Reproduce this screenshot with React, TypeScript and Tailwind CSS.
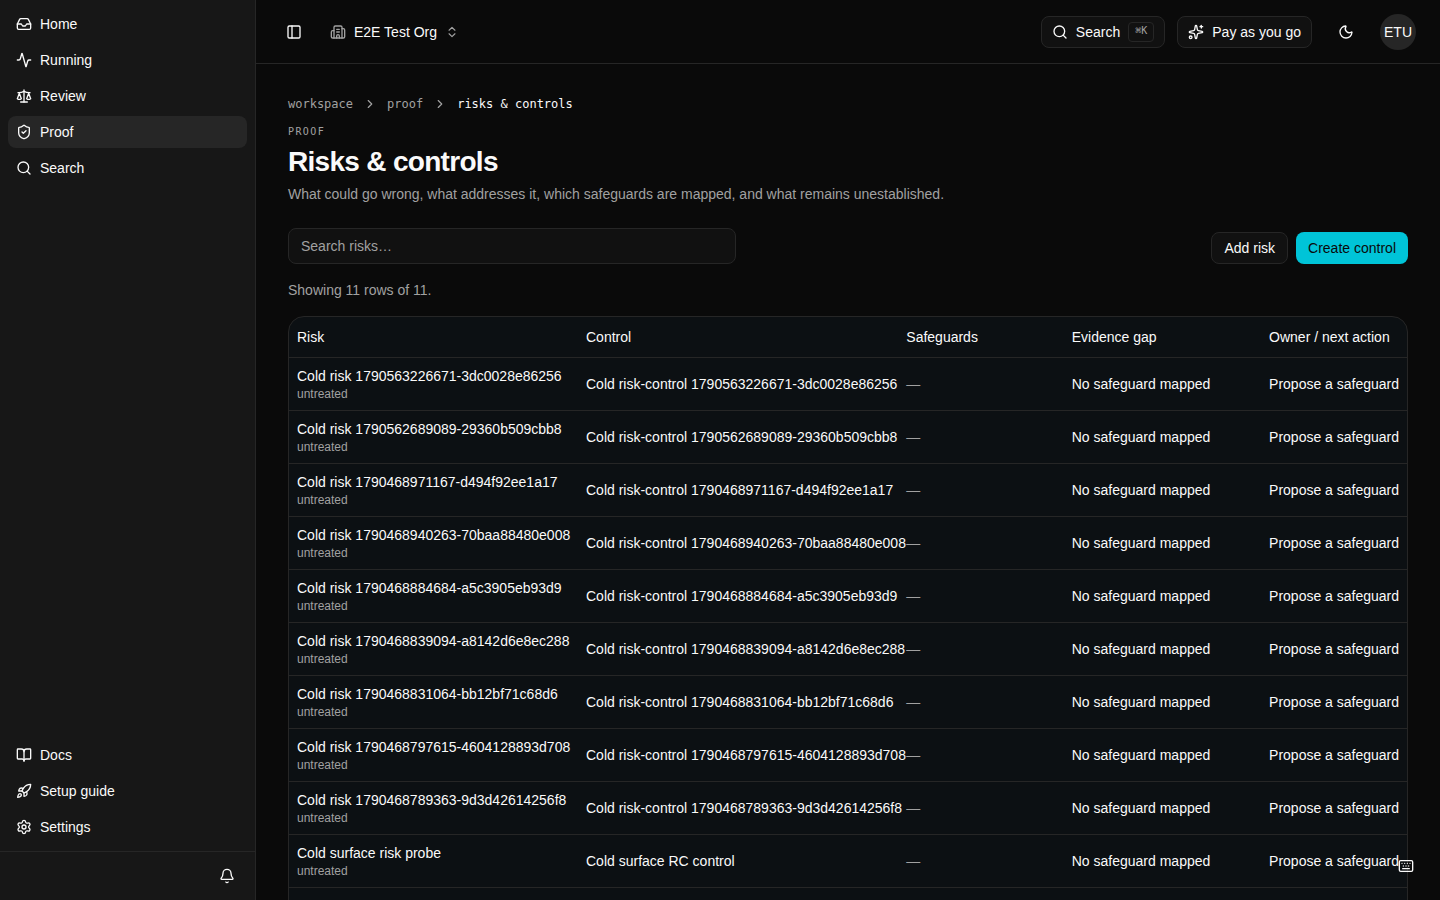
import React, { useState } from "react";
import {
    Activity,
    Bell,
    BookOpen,
    Building2,
    ChevronRight,
    ChevronsUpDown,
    Inbox,
    Keyboard,
    Moon,
    PanelLeft,
    Rocket,
    Scale,
    Search,
    Settings,
    ShieldCheck,
    Sparkles,
} from "lucide-react";
import type { LucideIcon } from "lucide-react";

type NavEntry = { label: string; icon: LucideIcon; active?: boolean };

const mainNav: NavEntry[] = [
    { label: "Home", icon: Inbox },
    { label: "Running", icon: Activity },
    { label: "Review", icon: Scale },
    { label: "Proof", icon: ShieldCheck, active: true },
    { label: "Search", icon: Search },
];

const footerNav: NavEntry[] = [
    { label: "Docs", icon: BookOpen },
    { label: "Setup guide", icon: Rocket },
    { label: "Settings", icon: Settings },
];

const coldIds = [
    "1790563226671-3dc0028e86256",
    "1790562689089-29360b509cbb8",
    "1790468971167-d494f92ee1a17",
    "1790468940263-70baa88480e008",
    "1790468884684-a5c3905eb93d9",
    "1790468839094-a8142d6e8ec288",
    "1790468831064-bb12bf71c68d6",
    "1790468797615-4604128893d708",
    "1790468789363-9d3d42614256f8",
];

const rows = [
    ...coldIds.map((id) => ({ risk: `Cold risk ${id}`, control: `Cold risk-control ${id}` })),
    { risk: "Cold surface risk probe", control: "Cold surface RC control" },
    { risk: "Cold surface risk", control: "Cold surface control" },
];

function NavList({ items }: { items: NavEntry[] }) {
    return (
        <ul className="flex flex-col gap-1 p-2">
            {items.map(({ label, icon: Icon, active }) => (
                <li key={label}>
                    <a
                        href="#"
                        aria-current={active ? "page" : undefined}
                        className={`flex h-8 items-center gap-2 rounded-lg px-2 hover:bg-[#262626] ${active ? "bg-[#262626]" : ""}`}
                    >
                        <Icon className="size-4" />
                        {label}
                    </a>
                </li>
            ))}
        </ul>
    );
}

function Sidebar() {
    return (
        <aside className="sticky top-0 flex h-screen w-64 shrink-0 flex-col border-r border-[#262626] bg-[#171717]">
            <nav aria-label="Main" className="flex flex-1 flex-col justify-between">
                <NavList items={mainNav} />
                <NavList items={footerNav} />
            </nav>
            <div className="flex justify-end border-t border-[#262626] px-3 py-2">
                <button aria-label="Notifications" className="flex size-8 items-center justify-center rounded-lg">
                    <Bell className="size-4" />
                </button>
            </div>
        </aside>
    );
}

function TopBar() {
    return (
        <header className="flex h-16 items-center justify-between border-b border-[#262626] px-6">
            <div className="flex items-center gap-4">
                <button aria-label="Toggle sidebar" className="flex size-7 items-center justify-center">
                    <PanelLeft className="size-4" />
                </button>
                <button className="flex h-8 items-center gap-2 px-1.5">
                    <Building2 className="size-4 text-[#a1a1a1]" />
                    E2E Test Org
                    <ChevronsUpDown className="size-3.5 text-[#a1a1a1]" />
                </button>
            </div>
            <div className="flex items-center gap-3">
                <button className="flex h-8 items-center gap-2 rounded-lg border border-[#262626] bg-[#111111] px-2.5">
                    <Search className="size-4" />
                    Search
                    <kbd className="rounded border border-[#262626] px-1.5 pb-0.5 font-['DejaVu_Sans_Mono',monospace] text-[10px] leading-4 text-[#a1a1a1]">
                        ⌘K
                    </kbd>
                </button>
                <button className="flex h-8 items-center gap-2 rounded-lg border border-[#262626] bg-[#111111] px-2.5">
                    <Sparkles className="size-4" />
                    Pay as you go
                </button>
                <button aria-label="Toggle theme" className="mx-1 flex size-9 items-center justify-center">
                    <Moon className="size-4" />
                </button>
                <button className="flex size-9 items-center justify-center rounded-full bg-[#262626]">ETU</button>
            </div>
        </header>
    );
}

export default function App() {
    const [query, setQuery] = useState("");
    const visible = rows.filter((r) => r.risk.toLowerCase().includes(query.toLowerCase()));

    return (
        <div className="flex min-h-screen bg-[#0a0a0a] font-['Liberation_Sans',Arial,sans-serif] text-sm text-[#fafafa]">
            <Sidebar />
            <div className="min-w-0 flex-1">
                <TopBar />
                <main className="p-8">
                    <nav
                        aria-label="Breadcrumb"
                        className="flex items-center gap-2.5 font-['DejaVu_Sans_Mono',monospace] text-xs text-[#a1a1a1]"
                    >
                        <a href="#">workspace</a>
                        <ChevronRight className="size-3.5" />
                        <a href="#">proof</a>
                        <ChevronRight className="size-3.5" />
                        <span className="text-[#fafafa]">risks &amp; controls</span>
                    </nav>

                    <p className="mt-3 font-['DejaVu_Sans_Mono',monospace] text-[10px] leading-4 tracking-[0.14em] text-[#a1a1a1] uppercase">
                        Proof
                    </p>
                    <h1 className="mt-1 text-[28px] leading-9 font-bold tracking-tight">Risks &amp; controls</h1>
                    <p className="mt-1 text-[#a1a1a1]">
                        What could go wrong, what addresses it, which safeguards are mapped, and what remains
                        unestablished.
                    </p>

                    <div className="mt-6 flex items-end justify-between gap-4">
                        <input
                            type="search"
                            aria-label="Search risks"
                            placeholder="Search risks…"
                            value={query}
                            onChange={(e) => setQuery(e.target.value)}
                            className="h-9 w-full max-w-md rounded-lg border border-[#262626] bg-[#111111] px-3 placeholder:text-[#a1a1a1]"
                        />
                        <div className="flex gap-2">
                            <button className="h-8 rounded-lg border border-[#262626] bg-[#111111] px-3">Add risk</button>
                            <button className="h-8 rounded-lg bg-[#00c4d8] px-3 text-[#0a0a0a]">Create control</button>
                        </div>
                    </div>

                    <p className="mt-4 text-[#a1a1a1]">
                        Showing {visible.length} rows of {rows.length}.
                    </p>

                    <div className="mt-4 overflow-hidden rounded-2xl border border-[#262626] bg-[#0c1013]">
                        <table className="w-full table-fixed text-left whitespace-nowrap">
                            <thead>
                                <tr className="h-10 border-b border-[#262626] *:px-2 *:font-normal">
                                    <th className="w-[25.85%]">Risk</th>
                                    <th className="w-[28.65%]">Control</th>
                                    <th className="w-[14.8%]">Safeguards</th>
                                    <th className="w-[17.65%]">Evidence gap</th>
                                    <th>Owner / next action</th>
                                </tr>
                            </thead>
                            <tbody>
                                {visible.map((r) => (
                                    <tr key={r.risk} className="border-b border-[#262626] last:border-b-0 *:p-2">
                                        <td>
                                            <div>{r.risk}</div>
                                            <div className="text-xs text-[#a1a1a1]">untreated</div>
                                        </td>
                                        <td>{r.control}</td>
                                        <td className="text-[#a1a1a1]">—</td>
                                        <td>No safeguard mapped</td>
                                        <td>Propose a safeguard</td>
                                    </tr>
                                ))}
                            </tbody>
                        </table>
                    </div>
                </main>
            </div>

            <button
                aria-label="Keyboard shortcuts"
                className="fixed right-4 bottom-4 flex size-9 items-center justify-center"
            >
                <Keyboard className="size-4" />
            </button>
        </div>
    );
}
